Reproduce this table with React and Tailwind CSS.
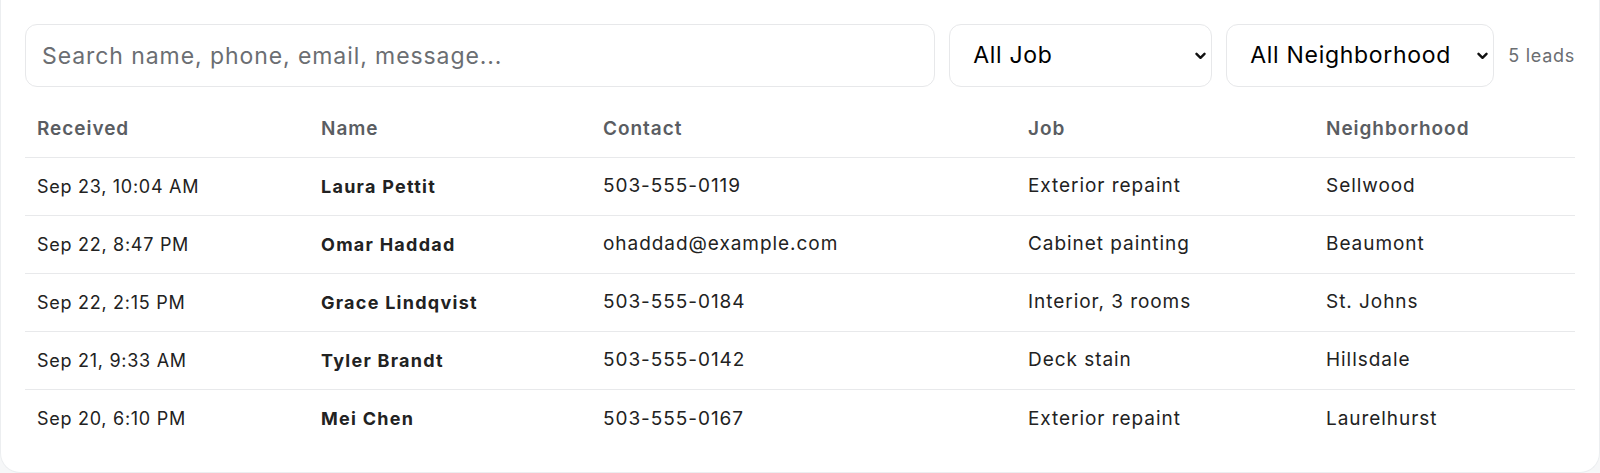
import React from "react";

const rows = [
  ["Sep 23, 10:04 AM", "Laura Pettit", "503-555-0119", "Exterior repaint", "Sellwood"],
  ["Sep 22, 8:47 PM", "Omar Haddad", "ohaddad@example.com", "Cabinet painting", "Beaumont"],
  ["Sep 22, 2:15 PM", "Grace Lindqvist", "503-555-0184", "Interior, 3 rooms", "St. Johns"],
  ["Sep 21, 9:33 AM", "Tyler Brandt", "503-555-0142", "Deck stain", "Hillsdale"],
  ["Sep 20, 6:10 PM", "Mei Chen", "503-555-0167", "Exterior repaint", "Laurelhurst"],
];

function Chevron() {
  return (
    <svg className="pointer-events-none absolute right-[6px] top-1/2 -translate-y-1/2" width="11" height="8" viewBox="0 0 11 8">
      <path d="M1.5 1.8 L5.5 5.8 L9.5 1.8" fill="none" stroke="#111" strokeWidth="2.4" strokeLinecap="round" strokeLinejoin="round" />
    </svg>
  );
}

export default function App() {
  return (
    <div className="min-h-[473px] bg-[#f6f7f8] font-['Inter',sans-serif]">
      <div className="h-[473px] rounded-b-[20px] border-x border-b border-[#eceef0] bg-white px-6 pt-6 pb-6">
        <div className="flex items-center gap-[14px]">
          <input
            className="h-[63px] min-w-0 flex-1 rounded-xl border border-[#e7e8ea] px-4 text-[23px] tracking-[0.04em] text-gray-800 placeholder:text-[#6b6e72] outline-none"
            placeholder="Search name, phone, email, message..."
          />
          <div className="relative w-[263px] shrink-0">
            <select className="h-[63px] w-full appearance-none rounded-xl border border-[#e7e8ea] bg-white pl-[23px] pr-8 text-[23px] tracking-[0.03em] text-black outline-none">
              <option>All Job</option>
            </select>
            <Chevron />
          </div>
          <div className="relative w-[268px] shrink-0">
            <select className="h-[63px] w-full appearance-none rounded-xl border border-[#e7e8ea] bg-white pl-[23px] pr-8 text-[23px] tracking-[0.03em] text-black outline-none">
              <option>All Neighborhood</option>
            </select>
            <Chevron />
          </div>
          <span className="shrink-0 text-[18px] tracking-[0.04em] text-[#6b6e72]">5 leads</span>
        </div>
        <table className="mt-3 w-full table-fixed border-collapse text-left">
          <colgroup>
            <col className="w-[284px]" />
            <col className="w-[282px]" />
            <col className="w-[425px]" />
            <col className="w-[298px]" />
            <col />
          </colgroup>
          <thead>
            <tr className="h-[58px] border-b border-[#e8e9eb]">
              {["Received", "Name", "Contact", "Job", "Neighborhood"].map((h) => (
                <th key={h} className="px-3 pt-[3px] text-[19px] font-semibold tracking-[0.05em] text-[#5a5d62]">{h}</th>
              ))}
            </tr>
          </thead>
          <tbody>
            {rows.map((r, i) => (
              <tr key={i} className={"h-[58px] " + (i < rows.length - 1 ? "border-b border-[#e8e9eb]" : "")}>
                <td className="px-3 pt-[1px] text-[18px] tracking-[0.04em] text-[#222]">{r[0]}</td>
                <td className="px-3 pt-[1px] text-[18px] font-bold tracking-[0.07em] text-[#222]">{r[1]}</td>
                <td className="px-3 pt-[1px] text-[19px] tracking-[0.05em] text-[#222]">{r[2]}</td>
                <td className="px-3 pt-[1px] text-[19px] tracking-[0.05em] text-[#222]">{r[3]}</td>
                <td className="px-3 pt-[1px] text-[19px] tracking-[0.05em] text-[#222]">{r[4]}</td>
              </tr>
            ))}
          </tbody>
        </table>
      </div>
    </div>
  );
}
